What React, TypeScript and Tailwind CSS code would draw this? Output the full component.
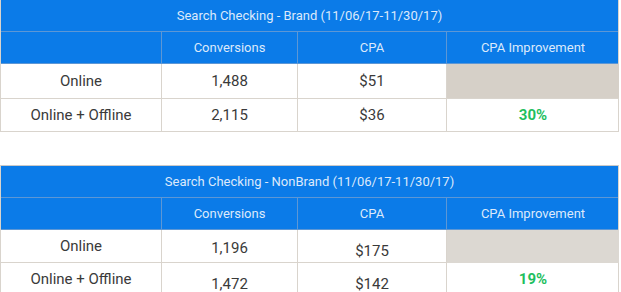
const cols = 'grid grid-cols-[161px_136px_149px_172px]';

type Row = {
  label: string;
  conv: string;
  cpa: string;
  improvement?: string;
  h: string;
  shift?: [string, string, string, string];
};

function ReportTable({
  title,
  rows,
  topBorder,
  grey,
}: {
  title: string;
  rows: Row[];
  topBorder?: boolean;
  grey: string;
}) {
  return (
    <div
      className={`w-[619px] border-l border-r border-[#d9d4cd] ${
        topBorder ? 'border-t border-t-[#c9c9c9]' : ''
      }`}
    >
      <div className="h-[32px] flex items-center justify-center bg-[#0b7be8] border-b border-[#5d97d5] text-[13px] text-[#dce9fb]">
        {title}
      </div>
      <div className={`${cols} h-[32px] bg-[#0b7be8] border-b border-[#5d97d5] text-[13px] text-[#dce9fb]`}>
        <div className="border-r border-[#5d97d5]" />
        <div className="flex items-center justify-center border-r border-[#5d97d5]">Conversions</div>
        <div className="flex items-center justify-center border-r border-[#5d97d5]">CPA</div>
        <div className="flex items-center justify-center">CPA Improvement</div>
      </div>
      {rows.map((r) => (
        <div
          key={r.label}
          className={`${cols} ${r.h} border-b border-[#d9d4cd] text-[15px] text-[#3a3a3a]`}
        >
          <div className={`flex items-center justify-center border-r border-[#d9d4cd] ${r.shift?.[0] ?? ''}`}>
            {r.label}
          </div>
          <div className={`flex items-center justify-center border-r border-[#d9d4cd] ${r.shift?.[1] ?? ''}`}>
            {r.conv}
          </div>
          <div className={`flex items-center justify-center border-r border-[#d9d4cd] ${r.shift?.[2] ?? ''}`}>
            {r.cpa}
          </div>
          {r.improvement ? (
            <div className={`flex items-center justify-center font-bold text-[#1fbf5f] ${r.shift?.[3] ?? ''}`}>
              {r.improvement}
            </div>
          ) : (
            <div className={grey} />
          )}
        </div>
      ))}
    </div>
  );
}

export default function App() {
  return (
    <div className="w-[621px] h-[292px] overflow-hidden bg-white font-['Roboto',sans-serif]">
      <ReportTable
        title="Search Checking - Brand (11/06/17-11/30/17)"
        grey="bg-[#d6d0c8]"
        rows={[
          { label: 'Online', conv: '1,488', cpa: '$51', h: 'h-[35px]' },
          { label: 'Online + Offline', conv: '2,115', cpa: '$36', improvement: '30%', h: 'h-[33px]' },
        ]}
      />
      <div className="h-[33px]" />
      <ReportTable
        title="Search Checking - NonBrand (11/06/17-11/30/17)"
        grey="bg-[#dcd8d2]"
        topBorder
        rows={[
          {
            label: 'Online',
            conv: '1,196',
            cpa: '$175',
            h: 'h-[33px]',
            shift: ['', 'pt-[4px]', 'pt-[10px]', ''],
          },
          {
            label: 'Online + Offline',
            conv: '1,472',
            cpa: '$142',
            improvement: '19%',
            h: 'h-[33px]',
            shift: ['', 'pt-[10px]', 'pt-[10px]', ''],
          },
        ]}
      />
    </div>
  );
}
